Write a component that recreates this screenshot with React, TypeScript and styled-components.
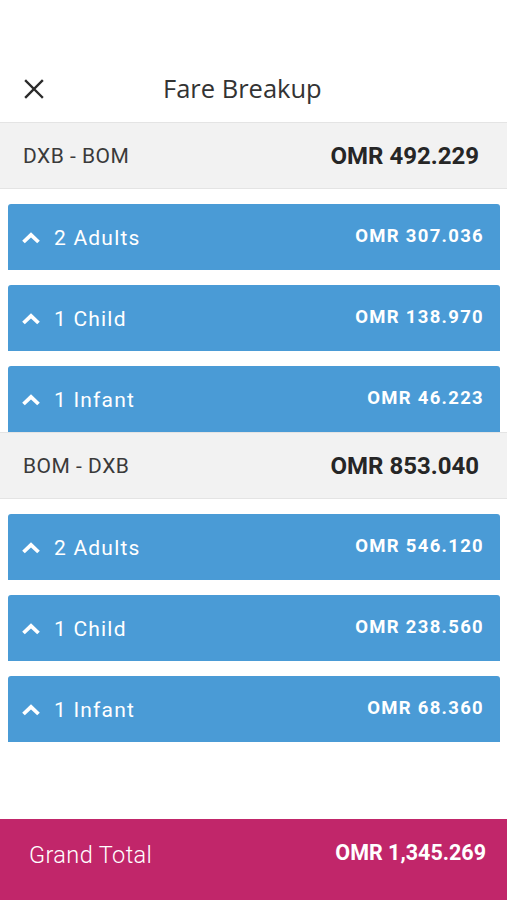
import styled, { createGlobalStyle } from "styled-components";

const GlobalStyle = createGlobalStyle`
  html, body {
    margin: 0;
    padding: 0;
    background: #ffffff;
  }
  * {
    box-sizing: border-box;
  }
`;

const Page = styled.div`
  height: 100vh;
  display: flex;
  flex-direction: column;
  font-family: Roboto, "Liberation Sans", sans-serif;
  overflow: hidden;
`;

const Header = styled.header`
  margin-top: 56px;
  height: 66px;
  display: flex;
  align-items: center;
  padding-left: 24px;
`;

const CloseButton = styled.button`
  border: none;
  background: none;
  padding: 0;
  width: 20px;
  height: 20px;
  display: flex;
  align-items: center;
  justify-content: center;
  cursor: pointer;
`;

const Title = styled.h1`
  margin: 0 0 2px 119px;
  font-family: "Open Sans", "Liberation Sans", sans-serif;
  font-size: 25.5px;
  font-weight: 500;
  color: #333333;
`;

const LegHeader = styled.div`
  height: 67px;
  display: flex;
  align-items: center;
  justify-content: space-between;
  padding: 0 28px 0 23px;
  background: #f2f2f2;
  border-top: 1px solid #e4e4e4;
  border-bottom: 1px solid #e4e4e4;
`;

const LegRoute = styled.span`
  font-size: 21px;
  color: #3a3a3a;
  letter-spacing: 0.5px;
`;

const LegTotal = styled.span`
  font-size: 24px;
  font-weight: 700;
  color: #262626;
`;

const CardList = styled.ul`
  list-style: none;
  margin: 0;
  padding: 15px 7px 0 8px;
  display: flex;
  flex-direction: column;
  gap: 15px;
`;

const PaxCard = styled.li`
  height: 66px;
  background: #4a9bd6;
  border-radius: 3px 3px 0 0;
  display: flex;
  align-items: center;
  justify-content: space-between;
  padding: 0 16px 0 13px;
  color: #ffffff;
`;

const PaxLabel = styled.span`
  display: flex;
  align-items: center;
  gap: 13px;
  font-size: 21px;
  letter-spacing: 1.2px;
  padding-top: 1px;
`;

const PaxPrice = styled.span`
  font-size: 18.5px;
  font-weight: 700;
  letter-spacing: 1.3px;
  padding-bottom: 2px;
`;

const Footer = styled.footer`
  margin-top: auto;
  height: 81px;
  background: #c1266a;
  display: flex;
  align-items: center;
  justify-content: space-between;
  padding: 0 21px 0 29px;
  color: #ffffff;
`;

const FooterLabel = styled.span`
  font-size: 23.5px;
  font-weight: 300;
  letter-spacing: 0.4px;
  padding-bottom: 10px;
`;

const FooterTotal = styled.span`
  font-size: 21.5px;
  font-weight: 700;
  padding-bottom: 14px;
`;

const CloseIcon = () => (
  <svg width="20" height="20" viewBox="0 0 20 20">
    <path
      d="M2 2 L18 18 M18 2 L2 18"
      stroke="#2b2b2b"
      strokeWidth="2.4"
      strokeLinecap="square"
    />
  </svg>
);

const Chevron = () => (
  <svg width="20" height="13" viewBox="0 0 20 13">
    <polyline
      points="2.5,11 10,3.8 17.5,11"
      fill="none"
      stroke="#ffffff"
      strokeWidth="3.8"
      strokeLinejoin="miter"
    />
  </svg>
);

interface Pax {
  label: string;
  price: string;
}

interface Leg {
  route: string;
  total: string;
  pax: Pax[];
}

const legs: Leg[] = [
  {
    route: "DXB - BOM",
    total: "OMR 492.229",
    pax: [
      { label: "2 Adults", price: "OMR 307.036" },
      { label: "1 Child", price: "OMR 138.970" },
      { label: "1 Infant", price: "OMR 46.223" },
    ],
  },
  {
    route: "BOM - DXB",
    total: "OMR 853.040",
    pax: [
      { label: "2 Adults", price: "OMR 546.120" },
      { label: "1 Child", price: "OMR 238.560" },
      { label: "1 Infant", price: "OMR 68.360" },
    ],
  },
];

const App = () => {
  return (
    <>
      <GlobalStyle />
      <Page>
        <Header>
          <CloseButton aria-label="Close">
            <CloseIcon />
          </CloseButton>
          <Title>Fare Breakup</Title>
        </Header>
        {legs.map((leg) => (
          <section key={leg.route}>
            <LegHeader>
              <LegRoute>{leg.route}</LegRoute>
              <LegTotal>{leg.total}</LegTotal>
            </LegHeader>
            <CardList>
              {leg.pax.map((p) => (
                <PaxCard key={p.label}>
                  <PaxLabel>
                    <Chevron />
                    {p.label}
                  </PaxLabel>
                  <PaxPrice>{p.price}</PaxPrice>
                </PaxCard>
              ))}
            </CardList>
          </section>
        ))}
        <Footer>
          <FooterLabel>Grand Total</FooterLabel>
          <FooterTotal>OMR 1,345.269</FooterTotal>
        </Footer>
      </Page>
    </>
  );
};

export default App;
